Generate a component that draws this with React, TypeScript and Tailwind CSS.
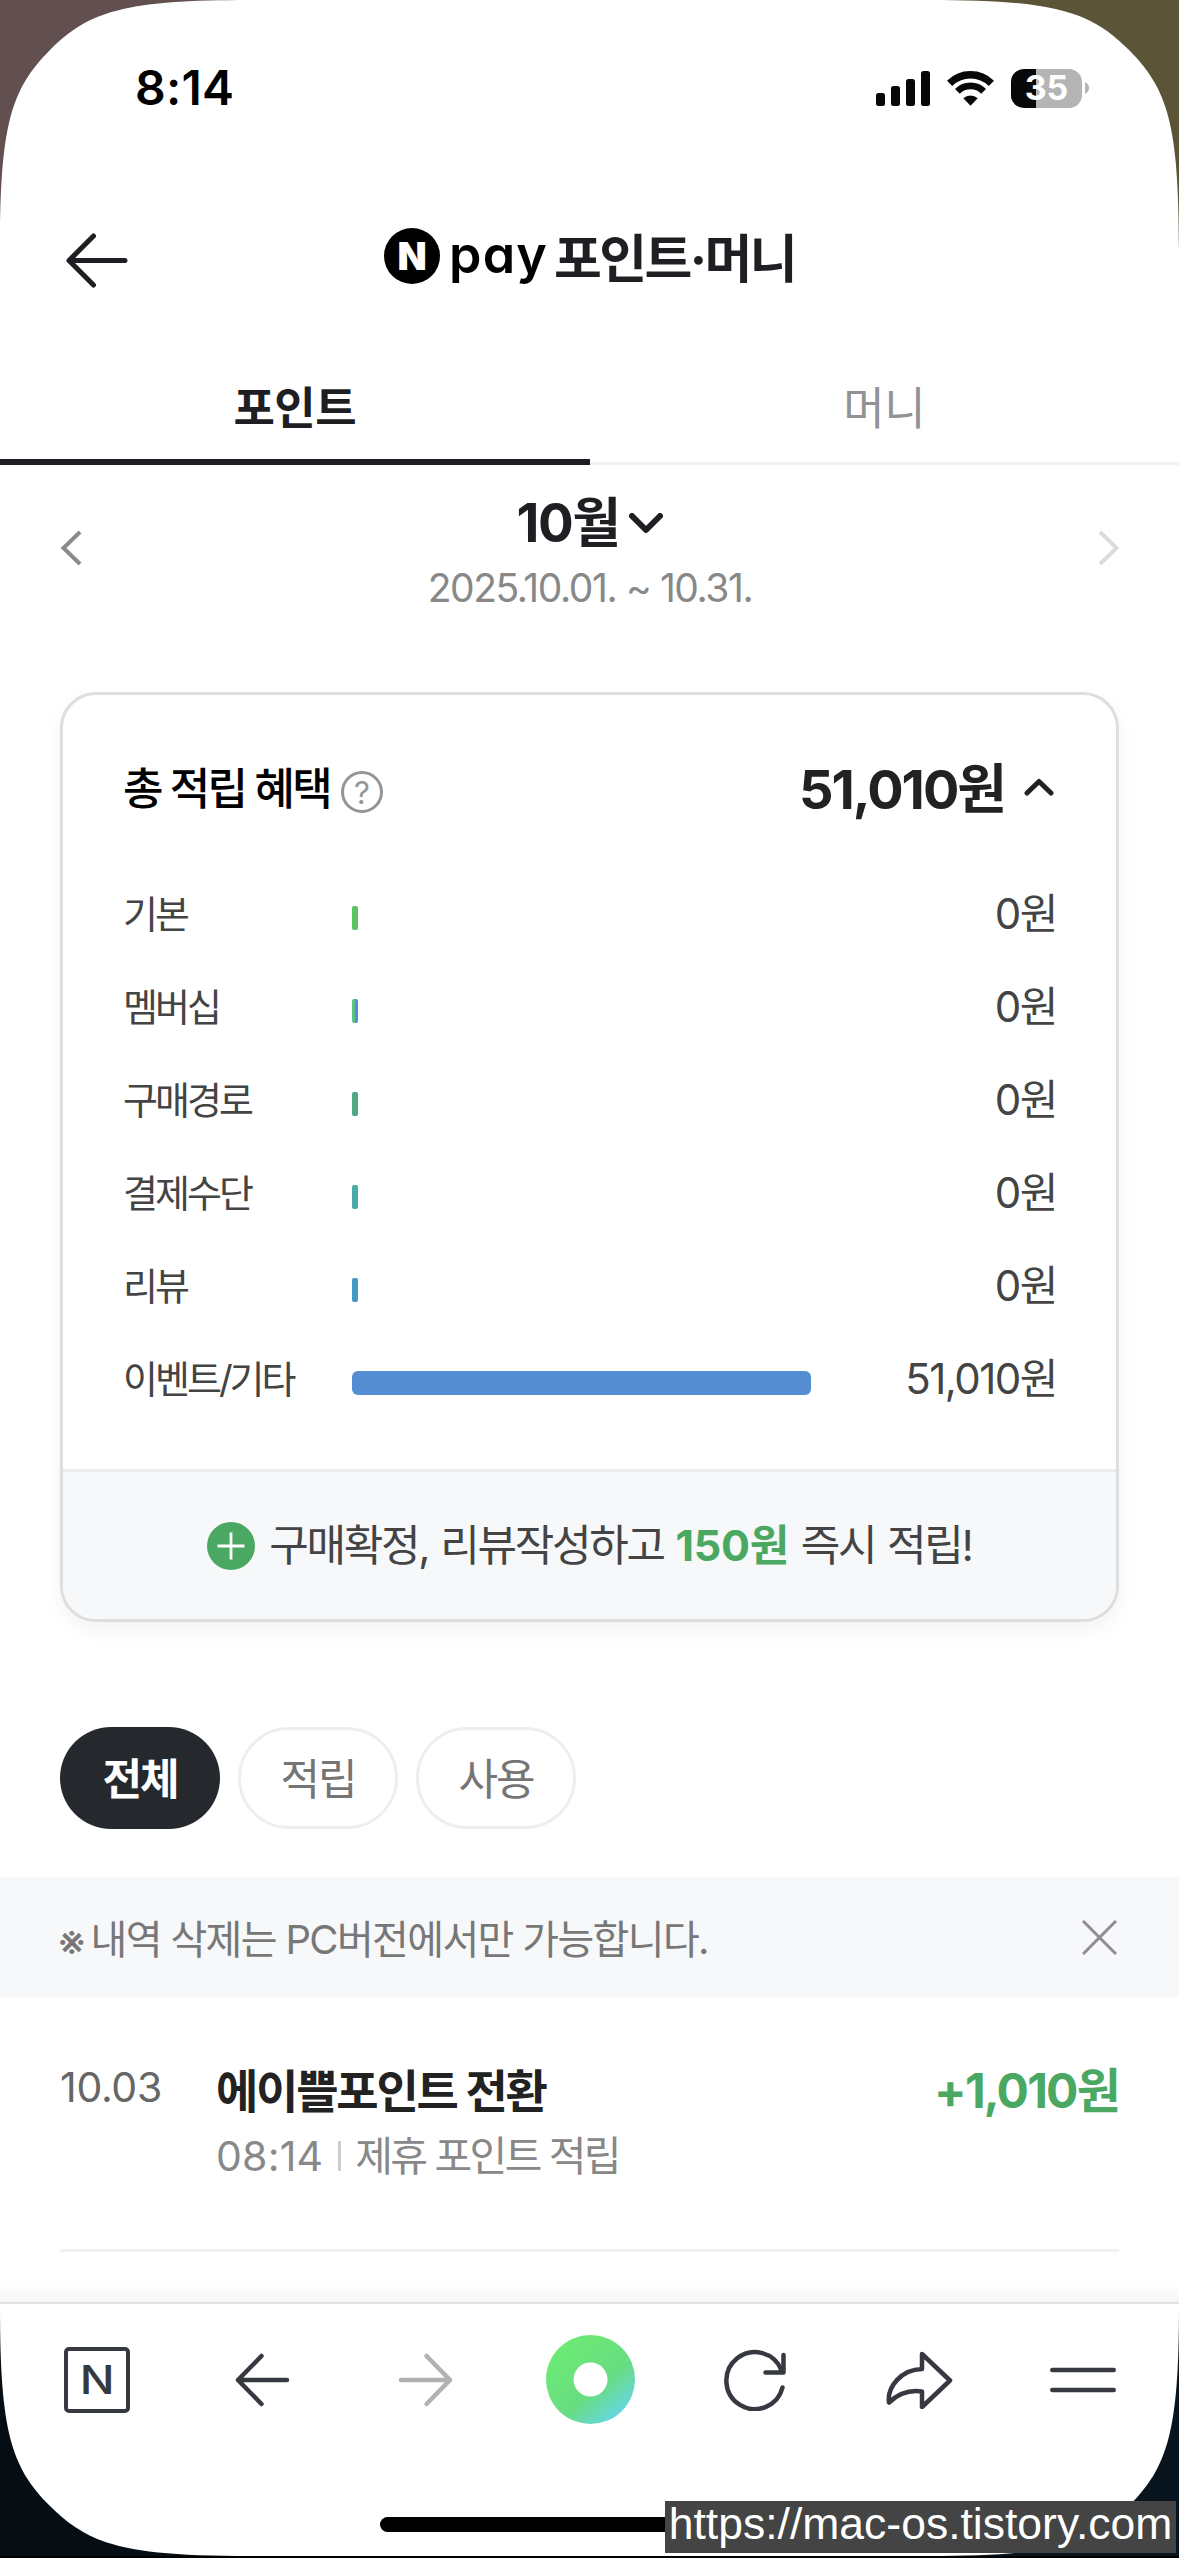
import React, { useState } from 'react';

interface Benefit {
  label: string;
  amount: number;
  color: string;
}

interface History {
  date: string;
  title: string;
  time: string;
  type: string;
  amount: string;
}

const benefits: Benefit[] = [
  { label: '기본', amount: 0, color: 'bg-[#5cc362]' },
  { label: '멤버십', amount: 0, color: 'bg-linear-to-r from-[#5cc37c] from-40% to-[#558dd2] to-60%' },
  { label: '구매경로', amount: 0, color: 'bg-[#4da980]' },
  { label: '결제수단', amount: 0, color: 'bg-[#4aaaa5]' },
  { label: '리뷰', amount: 0, color: 'bg-[#4498c4]' },
  { label: '이벤트/기타', amount: 51010, color: 'bg-[#558dd2]' },
];

const history: History[] = [
  { date: '10.03', title: '에이쁠포인트 전환', time: '08:14', type: '제휴 포인트 적립', amount: '+1,010원' },
];

const filters = ['전체', '적립', '사용'];
const tabs = ['포인트', '머니'];
const total = 51010;

const won = (value: number) => `${value.toLocaleString('en-US')}원`;

const StatusBar = () => (
  <div className="flex h-[176px] items-center pl-[135px] pr-[90px]">
    <span className="text-[48px] font-semibold leading-none tracking-[0.2px] text-black">8:14</span>
    <div className="ml-auto flex items-center">
      <svg width="54" height="35" viewBox="0 0 54 35" fill="#080808">
        <rect x="0" y="22" width="9" height="13" rx="2.5" />
        <rect x="15" y="15" width="9" height="20" rx="2.5" />
        <rect x="30" y="8" width="9" height="27" rx="2.5" />
        <rect x="45" y="0" width="9" height="35" rx="2.5" />
      </svg>
      <svg className="ml-[17px]" width="47" height="35" viewBox="0 0 47 35" fill="none" stroke="#080808">
        <path d="M2.6 12.4a29.6 29.6 0 0 1 41.8 0" strokeWidth="7.4" />
        <path d="M10.4 20.4a18.5 18.5 0 0 1 26.2 0" strokeWidth="6.8" />
        <path d="M16.3 27.2a10.6 10.6 0 0 1 14.4 0L23.5 34.8z" fill="#080808" stroke="none" />
      </svg>
      <div className="relative ml-[17px] flex h-[39px] w-[71px] items-center justify-center overflow-hidden rounded-[13px] bg-[#b4b4b4]">
        <div className="absolute inset-y-0 left-0 w-[25px] bg-[#080808]" />
        <span className="relative text-[34px] font-bold leading-none text-white">35</span>
      </div>
      <svg className="ml-[3px]" width="4" height="12" viewBox="0 0 4 12" fill="#b4b4b4">
        <path d="M0 0c2.600 1.400 4 3.600 4 6s-1.400 4.600-4 6z" />
      </svg>
    </div>
  </div>
);

const Header = () => (
  <header className="flex h-[168px] items-center px-[64px]">
    <svg width="65" height="56" viewBox="0 0 65 56" fill="none" stroke="#1e1e23" strokeWidth="5" strokeLinecap="round" strokeLinejoin="round">
      <path d="M29.500 4 5 28.500l24.500 24.500M5 28.500h56" />
    </svg>
    <div className="ml-[255px] flex items-center">
      <div className="mb-[8px] flex h-[56px] w-[56px] items-center justify-center rounded-full bg-black">
        <span className="text-[38px] font-black leading-none text-white">N</span>
      </div>
      <span className="ml-[9px] mb-[10px] text-[52px] font-semibold leading-none tracking-[1.2px] text-black [font-feature-settings:'cv11']">pay</span>
      <h1 className="ml-[6px] text-[52px] font-bold leading-none tracking-[-2.600px] text-[#1e1e23]">포인트·머니</h1>
    </div>
  </header>
);

const Toolbar = () => (
  <nav className="grid h-[153px] grid-cols-7 items-center justify-items-center border-t-2 border-[#e2e2e3] bg-white pl-[16px] pr-[14px] text-[#363940]">
    <div className="mr-[2px] flex h-[66px] w-[66px] items-center justify-center rounded-[5px] border-[4.500px] border-[#363940]">
      <span className="scale-x-115 text-[40px] font-medium leading-none">N</span>
    </div>
    <svg width="56" height="56" viewBox="0 0 56 56" fill="none" stroke="currentColor" strokeWidth="4.500" strokeLinecap="round" strokeLinejoin="round">
      <path d="M27.500 4 4 28l23.500 24M4 28h49" />
    </svg>
    <svg width="56" height="56" viewBox="0 0 56 56" fill="none" stroke="#b0b1b3" strokeWidth="4.500" strokeLinecap="round" strokeLinejoin="round">
      <path d="M28.500 4 52 28l-23.500 24M52 28H3" />
    </svg>
    <svg width="89" height="89" viewBox="0 0 89 89">
      <defs>
        <linearGradient id="dot" x1="0.150" y1="0.100" x2="0.850" y2="0.950">
          <stop offset="0" stopColor="#6ceb73" />
          <stop offset="0.600" stopColor="#68dc82" />
          <stop offset="1" stopColor="#66d6f0" />
        </linearGradient>
      </defs>
      <circle cx="44.500" cy="44.500" r="44.500" fill="url(#dot)" />
      <circle cx="44.500" cy="44.500" r="17" fill="#fff" />
    </svg>
    <svg width="62" height="62" viewBox="0 0 62 62" fill="none" stroke="currentColor" strokeWidth="4.500" strokeLinecap="round" strokeLinejoin="round">
      <path d="M58.500 38.500A28.500 28.500 0 1 1 57.500 21.500" />
      <path d="M59.500 6v17.500H41.500" />
    </svg>
    <svg width="68" height="58" viewBox="0 0 68 58" fill="none" stroke="currentColor" strokeWidth="4.500" strokeLinecap="round" strokeLinejoin="round">
      <path d="M37 3 65 29.500 37 56V40.500C23 38.500 13 43 4 51.500 2 36 16 18.500 37 18z" />
    </svg>
    <svg width="66" height="26" viewBox="0 0 66 26" stroke="currentColor" strokeWidth="4.500" strokeLinecap="round">
      <path d="M2.300 3H63.700M2.300 23H63.700" />
    </svg>
  </nav>
);

// rounded display corner, drawn for the top left and mirrored for the others
const Corner = ({ className }: { className: string }) => (
  <svg className={`absolute h-[250px] w-[250px] ${className}`} viewBox="0 0 250 250" fill="currentColor">
    <path d="M0 0H250C125 0 89 11 50 50C11 89 0 125 0 250Z" />
  </svg>
);

const App: React.FC = () => {
  const [tab, setTab] = useState(0);
  const [filter, setFilter] = useState(0);
  const [open, setOpen] = useState(true);
  const [notice, setNotice] = useState(true);

  return (
    <div className="relative h-[2558px] w-[1179px] overflow-hidden bg-white font-['Inter','Noto_Sans_CJK_KR',sans-serif]">
      <StatusBar />
      <Header />

      <div className="grid grid-cols-2">
        {tabs.map((name, index) => (
          <button key={name} className="flex flex-col" onClick={() => setTab(index)}>
            <span
              className={`flex h-[115px] w-full items-center justify-center pt-[13px] text-[45px] leading-none tracking-[-0.500px] ${
                tab === index ? 'font-bold text-[#1e1e23]' : 'text-[#929294]'
              }`}
            >
              {name}
            </span>
            <span className={`h-[6px] w-full ${tab === index ? 'bg-[#1e1e23]' : 'border-b-[3px] border-[#f1f1f2]'}`} />
          </button>
        ))}
      </div>

      <div className="flex h-[227px] items-start justify-between pt-[24px] pl-[60px] pr-[59px]">
        <svg className="mt-[41px]" width="23" height="36" viewBox="0 0 23 36" fill="none" stroke="#8a8a8c" strokeWidth="4">
          <path d="M20 2 3.500 18 20 34" />
        </svg>
        <div className="flex flex-col items-center">
          <div className="flex h-[66px] items-center pt-[3px] text-[53px] font-bold tracking-[-1.500px] text-[#1e1e23]">
            10월
            <svg className="ml-[10px]" width="34" height="21" viewBox="0 0 34 21" fill="none" stroke="currentColor" strokeWidth="6" strokeLinecap="round" strokeLinejoin="round">
              <path d="M3 3 17 17 31 3" />
            </svg>
          </div>
          <span className="text-[39px] leading-[66px] tracking-[-1.4px] text-[#888]">2025.10.01. ~ 10.31.</span>
        </div>
        <svg className="mt-[41px]" width="23" height="36" viewBox="0 0 23 36" fill="none" stroke="#dcdcde" strokeWidth="4">
          <path d="M3 2 19.500 18 3 34" />
        </svg>
      </div>

      <section className="mx-[60px] overflow-hidden rounded-[36px] border-[3px] border-[#dddedf] bg-white shadow-[0_8px_20px_rgba(0,0,0,0.05)]">
        <div className="flex h-[176px] items-center pt-[12px] pl-[60px] pr-[62px]">
          <h2 className="text-[44px] font-medium leading-none tracking-[-2.700px] text-black">총 적립 혜택</h2>
          <span className="mt-[6px] ml-[11px] flex h-[42px] w-[42px] items-center justify-center rounded-full border-[3px] border-[#959595] text-[31px] leading-none text-[#959595]">
            ?
          </span>
          <button className="ml-auto flex items-center pt-[2px] text-[54px] font-bold leading-none tracking-[-2px] text-[#222]" onClick={() => setOpen(!open)}>
            {won(total)}
            <svg className="ml-[19px] mb-[6px]" width="30" height="18" viewBox="0 0 30 18" fill="none" stroke="currentColor" strokeWidth="5" strokeLinecap="round" strokeLinejoin="round">
              <path d="M3 15 15 3.500 27 15" />
            </svg>
          </button>
        </div>
        {open && (
          <ul className="pb-[40px] pl-[60px] pr-[59px]">
            {benefits.map((item) => (
              <li key={item.label} className="flex h-[93px] items-center">
                <span className="w-[229px] pb-[7px] text-[38px] leading-none tracking-[-3px] text-[#444]">{item.label}</span>
                <span
                  className={`h-[24px] min-w-[6px] ${item.amount > 0 ? 'rounded-[6px]' : 'rounded-[2px]'} ${item.color}`}
                  style={{ width: (item.amount / total) * 459 }}
                />
                <span className="ml-auto pb-[7px] text-[42px] leading-none tracking-[-1.500px] text-[#444]">{won(item.amount)}</span>
              </li>
            ))}
          </ul>
        )}
        <div className="flex h-[150px] items-center justify-center border-t-[3px] border-[#ebeced] bg-[#f7f8fa] text-[43px] tracking-[-2.300px] text-[#444]">
          <svg className="mr-[14px]" width="48" height="48" viewBox="0 0 48 48" fill="none">
            <circle cx="24" cy="24" r="24" fill="#4ba862" />
            <path d="M24 10.500v27M10.500 24h27" stroke="#fff" strokeWidth="2.800" />
          </svg>
          <p className="whitespace-pre leading-none [word-spacing:2px]">
            구매확정, 리뷰작성하고 <b className="font-bold tracking-[-0.300px] text-[#4ba862]">150원</b> 즉시 적립!
          </p>
        </div>
      </section>

      <div className="mt-[105px] flex gap-[18px] pl-[60px]">
        {filters.map((name, index) => (
          <button
            key={name}
            onClick={() => setFilter(index)}
            className={`flex h-[102px] w-[160px] items-center justify-center rounded-[51px] pt-[2px] text-[43px] leading-none tracking-[-2px] ${
              filter === index ? 'bg-[#25282d] font-bold text-white' : 'border-[3px] border-[#edeef2] text-[#757575]'
            }`}
          >
            {name}
          </button>
        ))}
      </div>

      {notice && (
        <div className="mt-[48px] flex h-[120px] items-center bg-[#f7f8fa] pl-[58px] pr-[62px] text-[#777]">
          <span className="mt-[9px] text-[43px] leading-none">※</span>
          <p className="ml-[5px] mt-[5px] text-[40px] leading-none tracking-[-1.650px]">내역 삭제는 PC버전에서만 가능합니다.</p>
          <button className="ml-auto" onClick={() => setNotice(false)}>
            <svg width="35" height="35" viewBox="0 0 35 35" stroke="#8e8e90" strokeWidth="3">
              <path d="M1 1 34 34M34 1 1 34" />
            </svg>
          </button>
        </div>
      )}

      {history.map((item) => (
        <div key={item.title} className="mx-[60px] flex border-b-[3px] border-[#f1f1f2] py-[60px]">
          <span className="w-[156px] text-[41px] leading-[60px] tracking-[-0.300px] text-[#666]">{item.date}</span>
          <div className="flex flex-1 flex-col">
            <span className="h-[66px] text-[46px] font-bold leading-[68px] tracking-[-2.200px] text-[#222]">{item.title}</span>
            <div className="flex h-[66px] items-center text-[41px] leading-none tracking-[-2.600px] text-[#888]">
              <span className="tracking-[0.200px]">{item.time}</span>
              <span className="mr-[14px] ml-[15px] h-[30px] w-[3px] bg-[#ccc]" />
              <span>{item.type}</span>
            </div>
          </div>
          <span className="text-[48px] font-bold leading-[68px] tracking-[-1.800px] text-[#4ba862]">{item.amount}</span>
        </div>
      ))}

      <div className="mt-[32px] h-[18px] bg-linear-to-b from-white to-[#f4f6f7]" />
      <Toolbar />
      <div className="flex h-[103px] flex-col items-center justify-between">
        <div className="mt-[62px] h-[15px] w-[419px] rounded-full bg-black" />
        <div className="h-[2px] w-full bg-black" />
      </div>

      <Corner className="top-0 left-0 text-[#61504f]" />
      <Corner className="top-0 right-0 -scale-x-100 text-[#5c5436]" />
      <Corner className="bottom-[2px] left-0 -scale-y-100 text-[#060e13]" />
      <Corner className="right-0 bottom-[2px] -scale-100 text-[#08151f]" />

      <div className="absolute right-[3px] bottom-[5px] flex h-[52px] w-[511px] items-center justify-center bg-[#444] pb-[5px] font-['Liberation_Sans',sans-serif] text-[44.500px] leading-none text-white">
        https://mac-os.tistory.com
      </div>
    </div>
  );
};

export default App;
